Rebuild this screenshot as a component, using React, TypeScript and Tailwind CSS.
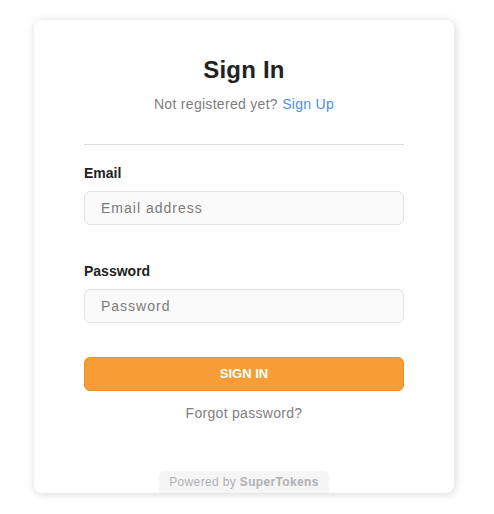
import React from "react";

export default function App() {
  return (
    <div
      className="min-h-[514px] w-full bg-white pt-[20px] pl-[34px]"
      style={{ fontFamily: '"Liberation Sans", Arial, sans-serif' }}
    >
      <div className="flex h-[473px] w-[420px] flex-col items-center rounded-lg bg-white shadow-[1px_1px_10px_rgba(0,0,0,0.16)]">
        <div className="flex w-[320px] flex-col">
          <h1 className="mt-[32px] text-center text-[24px] font-bold leading-[36px] tracking-[0.2px] text-[#222222]">
            Sign In
          </h1>
          <p className="mt-[6px] text-center text-[14px] leading-[20px] tracking-[0.3px] text-[#7d7d7d]">
            Not registered yet? <span className="text-[#4a8ff0]">Sign Up</span>
          </p>
          <div className="mt-[30px] h-px w-full bg-[#dddddd]" />
          <label className="mt-[18px] text-[14px] font-bold leading-[20px] text-[#222222]">
            Email
          </label>
          <input
            className="mt-[8px] h-[34px] w-full rounded-md border border-[#e2e2e2] bg-[#fafafa] px-[16px] text-[14px] tracking-[1px] text-[#222] outline-none placeholder:text-[#7a7a7a]"
            placeholder="Email address"
            readOnly
          />
          <label className="mt-[36px] text-[14px] font-bold leading-[20px] text-[#222222]">
            Password
          </label>
          <input
            type="password"
            className="mt-[8px] h-[34px] w-full rounded-md border border-[#e2e2e2] bg-[#fafafa] px-[16px] text-[14px] tracking-[1px] text-[#222] outline-none placeholder:text-[#7a7a7a]"
            placeholder="Password"
            readOnly
          />
          <button className="mt-[34px] flex h-[34px] w-full items-center justify-center rounded-md border border-[#ee8d23] bg-[#f89c36] text-[13px] font-bold text-white">
            SIGN IN
          </button>
          <p className="mt-[12px] text-center text-[14px] leading-[20px] tracking-[0.3px] text-[#808080]">
            Forgot password?
          </p>
        </div>
        <div className="mt-auto flex h-[22px] items-center rounded-t-md bg-[#f5f5f5] px-[10px] text-[12px] tracking-[0.35px] text-[#b0b0b4]">
          Powered by&nbsp;<span className="font-bold">SuperTokens</span>
        </div>
      </div>
    </div>
  );
}
